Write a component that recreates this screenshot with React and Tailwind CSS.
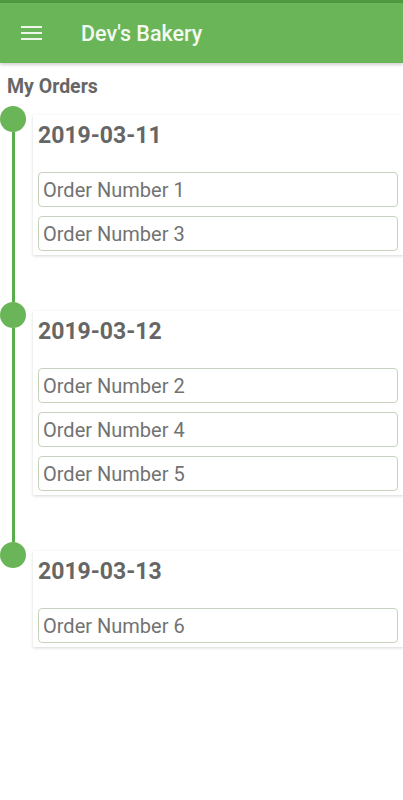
import React from "react";

const DAYS = [
  { date: "2019-03-11", orders: ["Order Number 1", "Order Number 3"] },
  { date: "2019-03-12", orders: ["Order Number 2", "Order Number 4", "Order Number 5"] },
  { date: "2019-03-13", orders: ["Order Number 6"] },
];

function TimelineItem({ day, last }) {
  return (
    <div className="flex">
      <div className="flex w-[26px] shrink-0 flex-col items-center">
        <div className="h-[26px] w-[26px] rounded-full bg-[#6ab557]" />
        {!last && <div className="w-[3px] flex-1 bg-[#5aad4c]" />}
      </div>
      <div className={`ml-[7px] mt-[9px] flex-1 ${last ? "" : "mb-[47px]"}`}>
        <div className="bg-white px-[5px] pb-[4px] pt-[5px] shadow-[0_1px_3px_rgba(0,0,0,0.16)]">
          <div className="mb-[20px] h-[32px] text-[23px] font-bold leading-[32px] text-[#666666]">
            {day.date}
          </div>
          <div className="flex flex-col gap-[9px]">
            {day.orders.map((o) => (
              <div
                key={o}
                className="flex h-[35px] items-center rounded-[4px] border border-[#c6d2bd] pl-[4px] text-[20px] text-[#727272]"
              >
                {o}
              </div>
            ))}
          </div>
        </div>
      </div>
    </div>
  );
}

export default function App() {
  return (
    <div className="min-h-[800px] w-[403px] bg-white font-['Roboto',sans-serif]">
      <div className="h-[3px] bg-[#4d9a42]" />
      <header className="flex h-[60px] items-center bg-[#6ab557] shadow-[0_2px_3px_rgba(0,0,0,0.18)]">
        <div className="ml-[21px] flex w-[21px] flex-col gap-[4px]">
          <span className="h-[2px] bg-[#eef6eb]" />
          <span className="h-[2px] bg-[#eef6eb]" />
          <span className="h-[2px] bg-[#eef6eb]" />
        </div>
        <h1 className="ml-[39px] pt-[3px] text-[21.5px] font-medium text-[#f3f9f1]">Dev's Bakery</h1>
      </header>
      <div className="pl-[7px] pt-[12px] text-[19.5px] font-bold leading-[24px] text-[#666666]">
        My Orders
      </div>
      <div className="mt-[7px]">
        {DAYS.map((d, i) => (
          <TimelineItem key={d.date} day={d} last={i === DAYS.length - 1} />
        ))}
      </div>
    </div>
  );
}
